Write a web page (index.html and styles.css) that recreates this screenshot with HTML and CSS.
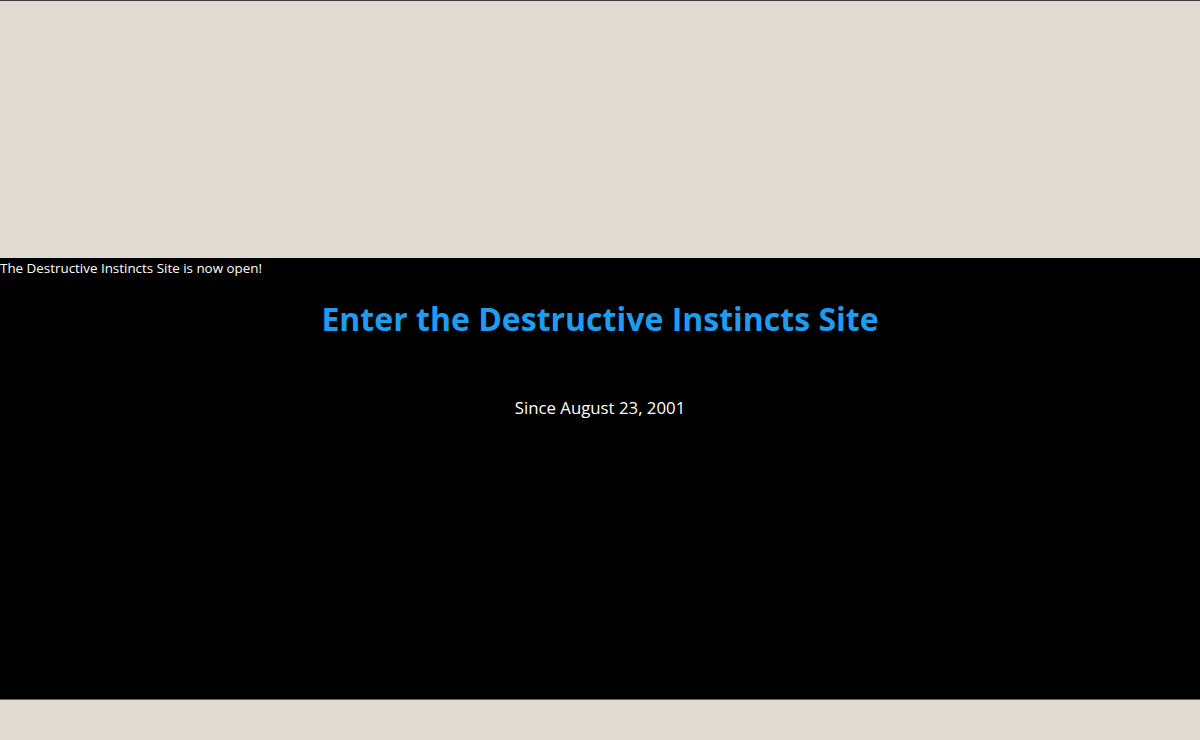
FILE: index.html
```
<!DOCTYPE html>
<html lang="en">
<head>
<meta charset="utf-8">
<title>Destructive Instincts</title>
<link rel="stylesheet" href="styles.css">
</head>
<body>
<div class="topbar"></div>
<main class="stage">
  <p class="notice">The Destructive Instincts Site is now open!</p>
  <h1 class="title">Enter the Destructive Instincts Site</h1>
  <p class="since">Since August 23, 2001</p>
</main>
<div class="bottombar"></div>
</body>
</html>
```
FILE: styles.css
```
html, body {
  margin: 0;
  padding: 0;
  background: #dfdbd0;
  font-family: "Open Sans", "Noto Sans", sans-serif;
}
body {
  border-top: 1px solid #3a3a3a;
  height: 739px;
  overflow: hidden;
}
.topbar {
  height: 257px;
}
.stage {
  background: #000;
  height: 441px;
  border-bottom: 1px solid #6a6760;
  color: #fff;
}
.notice {
  margin: 0;
  padding-top: 2px;
  font-size: 13.4px;
  line-height: 16px;
}
.title {
  margin: 21px 0 0;
  text-align: center;
  color: #1e9cf0;
  font-size: 32px;
  line-height: 44px;
  font-weight: 700;
}
.since {
  margin: 56px 0 0;
  text-align: center;
  font-size: 16.8px;
  line-height: 22px;
}
```
